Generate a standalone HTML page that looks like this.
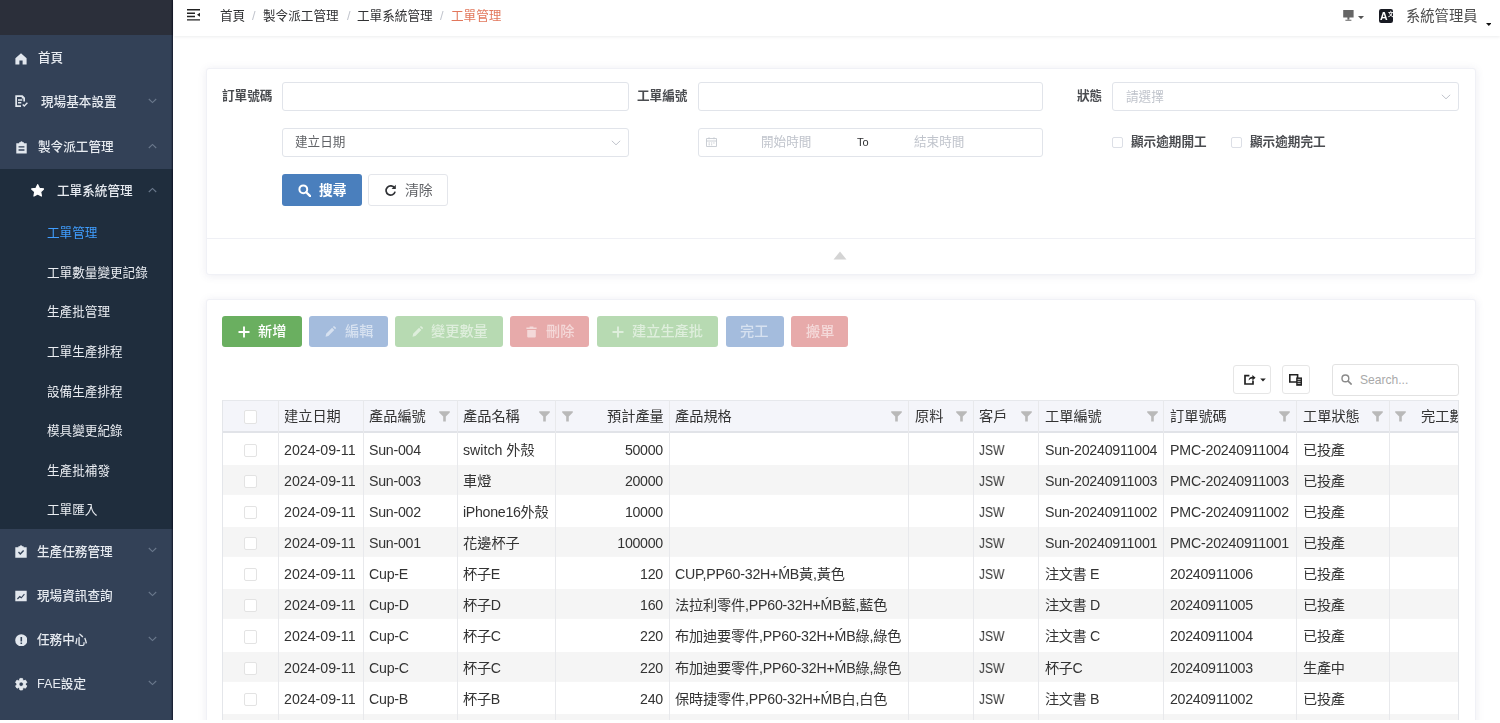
<!DOCTYPE html>
<html lang="zh-Hant">
<head>
<meta charset="utf-8">
<title>工單管理</title>
<style>
*{box-sizing:border-box;margin:0;padding:0}
html,body{width:1500px;height:723px;overflow:hidden;background:#fff}
body{font-family:"Liberation Sans","Noto Sans CJK TC",sans-serif;font-size:12.6px;color:#303133;position:relative}
.abs{position:absolute}
.td,.th,.mi,.si,.bc,.lbl,.btn span,.ph,.tx{will-change:transform}
/* sidebar */
#side{position:absolute;left:0;top:0;width:173.3px;height:723px;background:#334157}
#logo{position:absolute;left:0;top:0;width:173.3px;height:35px;background:#2b2f3a}
#sub{position:absolute;left:0;top:168.5px;width:173.3px;height:360.5px;background:#1f2d3d}
.mi{position:absolute;left:38px;font-weight:500;color:#e6eaf0;font-size:12.6px;line-height:16px;white-space:nowrap;height:16px}
.si{position:absolute;left:47px;color:#eaedf2;font-size:12.6px;line-height:16px;white-space:nowrap;height:16px}
.si.act{color:#409eff}
.ico{position:absolute}
.arr{position:absolute;left:148px;width:9px;height:6px}
/* navbar */
#nav{position:absolute;left:173.5px;top:0;width:1326.5px;height:36px;background:#fff;box-shadow:0 1px 3px rgba(0,21,41,.08)}
.bc{position:absolute;top:8px;line-height:16px;font-size:12.6px;color:#303133;white-space:nowrap}
.bc.sep{color:#c0c4cc}
.bc.last{color:#e2775c}
/* cards */
.card{position:absolute;background:#fff;border:1px solid #f0f1f6;border-radius:3px;box-shadow:0 1px 9px rgba(70,70,120,.10)}
.lbl{position:absolute;font-weight:700;color:#4a4c50;font-size:12.6px;line-height:16px;white-space:nowrap}
.inp{position:absolute;height:28.4px;border:1px solid #e1e4ea;border-radius:3px;background:#fff}
.ph{position:absolute;color:#c0c4cc;font-size:11px;line-height:14px;white-space:nowrap}
.cb{position:absolute;width:11px;height:11px;border:1px solid #dcdfe6;border-radius:2px;background:#fff}
.btn{position:absolute;border-radius:3px;color:#fff;font-size:12.6px;white-space:nowrap}
.btn span{position:absolute;line-height:16px}
/* table */
#tbl{position:absolute;left:222px;top:399.8px;width:1236.5px;height:322.5px;overflow:hidden;border-left:1px solid #e4e6ea;border-right:1px solid #e4e6ea}
#thead{position:absolute;left:0;top:0;width:1236.5px;height:33.2px;background:#f4f5fa;border-top:1px solid #e6e8ec;border-bottom:2px solid #e1e3e8}
.tr{position:absolute;left:0;width:1236.5px;height:31.2px}
.tr.g{background:linear-gradient(#f5f5f5,#f5f5f5) 0 0.6px/100% 29.9px no-repeat}
.vl{position:absolute;top:0;width:1px;height:323px;background:#e8e9ec}
.th{position:absolute;top:8.4px;font-size:14.2px;line-height:16px;color:#333;white-space:nowrap}
.td{position:absolute;font-size:14.2px;line-height:18px;color:#333;white-space:nowrap;top:7.7px}
.td.r{text-align:right}
.fl{position:absolute;top:11px;width:11px;height:11px}
</style>
</head>
<body>
<div id="side">
  <div id="logo"></div>
  <div id="sub"></div>
  <div class="abs" style="left:170.8px;top:0;width:2.5px;height:723px;background:linear-gradient(90deg,rgba(8,10,28,0),rgba(8,10,28,.75))"></div>
  <!-- icons -->
  <svg class="ico" style="left:14.8px;top:52.6px" width="12" height="12" viewBox="0 0 12 12"><path d="M6 0.3 L11.6 5.2 V11.6 H7.6 V7.6 H4.4 V11.6 H0.4 V5.2 Z" fill="#e2e7ee"/></svg>
  <svg class="ico" style="left:15px;top:95.2px" width="13" height="13" viewBox="0 0 13 13"><path d="M0.3 0.3 H7.6 L10 2.7 V6.6 H8.3 V3.6 H6.7 V2 H2 V10.3 H6 V12 H0.3 Z M3 4.3 H7.3 V5.7 H3 Z M3 7 H6.3 V8.4 H3 Z M7.2 10 L8.2 9 L9.3 10.1 L11.9 7.3 L12.9 8.3 L9.3 12.1 Z" fill="#e2e7ee"/></svg>
  <svg class="ico" style="left:15.5px;top:141.4px" width="11" height="12.6" viewBox="0 0 12 13" preserveAspectRatio="none"><path d="M0.3 2.2 H3.4 V1.2 H4.6 Q6 -0.6 7.4 1.2 H8.6 V2.2 H11.7 V12.8 H0.3 Z M2.8 5.4 V6.8 H9.2 V5.4 Z M2.8 8.6 V10 H9.2 V8.6 Z" fill="#e2e7ee" fill-rule="evenodd"/></svg>
  <svg class="ico" style="left:30.9px;top:183.9px" width="13.4" height="12.8" viewBox="-0.5 -0.5 14 13.4"><path d="M6.5 0.2 L8.4 4.2 L12.8 4.7 L9.6 7.7 L10.4 12.1 L6.5 10 L2.6 12.1 L3.4 7.7 L0.2 4.7 L4.6 4.2 Z" fill="#ffffff" stroke="#fff" stroke-width="1.3" stroke-linejoin="round"/></svg>
  <svg class="ico" style="left:14.8px;top:545.2px" width="12" height="13" viewBox="0 0 12 13"><path d="M0.3 2.2 H3.4 V1.2 H4.6 Q6 -0.6 7.4 1.2 H8.6 V2.2 H11.7 V12.8 H0.3 Z M3 7.6 L4 6.6 L5.3 7.9 L8.1 5.1 L9.1 6.1 L5.3 9.9 Z" fill="#e2e7ee" fill-rule="evenodd"/></svg>
  <svg class="ico" style="left:14.8px;top:590px" width="12" height="12" viewBox="0 0 12 12"><path d="M0.3 0.8 H11.7 V11.2 H0.3 Z M2 8.6 L2.8 9.4 L4.8 7.4 L6.4 8.6 L9.8 4.6 L9 3.8 L6.3 7 L4.7 5.8 Z" fill="#e2e7ee" fill-rule="evenodd"/></svg>
  <svg class="ico" style="left:14.5px;top:633.8px" width="12.6" height="12.6" viewBox="0 0 12.6 12.6"><path d="M6.3 0.2 A6.1 6.1 0 1 0 6.3 12.4 A6.1 6.1 0 1 0 6.3 0.2 Z M5.5 3 H7.1 V7.4 H5.5 Z M5.5 8.4 H7.1 V10 H5.5 Z" fill="#e2e7ee" fill-rule="evenodd"/></svg>
  <svg class="ico" style="left:13.6px;top:677.4px" width="14.4" height="14.4" viewBox="0 0 24 24"><path d="M19.14 12.94c.04-.3.06-.61.06-.94 0-.32-.02-.64-.07-.94l2.03-1.58a.49.49 0 0 0 .12-.61l-1.92-3.32a.488.488 0 0 0-.59-.22l-2.39.96c-.5-.38-1.030-.7-1.620-.94l-.36-2.540a.484.484 0 0 0-.48-.41h-3.840c-.24 0-.43.17-.47.41l-.36 2.540c-.59.240-1.130.570-1.620.94l-2.390-.96c-.22-.08-.47 0-.59.22L2.740 8.870c-.12.210-.08.470.12.610l2.030 1.580c-.05.300-.09.630-.09.940s.02.640.07.940l-2.030 1.580a.49.49 0 0 0-.12.610l1.920 3.320c.12.220.37.290.59.220l2.390-.96c.5.380 1.030.7 1.620.94l.36 2.540c.05.240.24.410.48.410h3.840c.24 0 .44-.17.470-.41l.36-2.540c.59-.24 1.130-.56 1.620-.94l2.390.96c.22.08.47 0 .59-.22l1.920-3.320c.12-.22.070-.47-.12-.61l-2.010-1.580zM12 15.600c-1.980 0-3.600-1.620-3.600-3.600s1.620-3.600 3.600-3.600 3.600 1.620 3.600 3.600-1.620 3.600-3.600 3.600z" fill="#e2e7ee" stroke="#f4f6f9" stroke-width="1.2"/></svg>
  <!-- labels -->
  <div class="mi" style="left:37.6px;top:50px">首頁</div>
  <div class="mi" style="left:40.5px;top:94px">現場基本設置</div>
  <div class="mi" style="left:37.6px;top:139px">製令派工管理</div>
  <div class="mi" style="left:56.5px;top:183.3px">工單系統管理</div>
  <div class="si act" style="top:225.3px">工單管理</div>
  <div class="si" style="top:264.8px">工單數量變更記錄</div>
  <div class="si" style="top:304.3px">生產批管理</div>
  <div class="si" style="top:343.8px">工單生產排程</div>
  <div class="si" style="top:383.5px">設備生產排程</div>
  <div class="si" style="top:423.1px">模具變更紀錄</div>
  <div class="si" style="top:462.6px">生產批補發</div>
  <div class="si" style="top:502.2px">工單匯入</div>
  <div class="mi" style="left:37.3px;top:543.5px">生產任務管理</div>
  <div class="mi" style="left:37.3px;top:587.7px">現場資訊查詢</div>
  <div class="mi" style="left:37.3px;top:632px">任務中心</div>
  <div class="mi" style="left:37.3px;top:676.3px">FAE設定</div>
  <!-- arrows -->
  <svg class="arr" style="top:98px" viewBox="0 0 9 6"><path d="M0.8 1 L4.5 4.6 L8.2 1" fill="none" stroke="#6a788c" stroke-width="1.1"/></svg>
  <svg class="arr" style="top:142.5px" viewBox="0 0 9 6"><path d="M0.8 5 L4.5 1.4 L8.2 5" fill="none" stroke="#6a788c" stroke-width="1.1"/></svg>
  <svg class="arr" style="top:186.5px" viewBox="0 0 9 6"><path d="M0.8 5 L4.5 1.4 L8.2 5" fill="none" stroke="#6a788c" stroke-width="1.1"/></svg>
  <svg class="arr" style="top:547px" viewBox="0 0 9 6"><path d="M0.8 1 L4.5 4.6 L8.2 1" fill="none" stroke="#6a788c" stroke-width="1.1"/></svg>
  <svg class="arr" style="top:591px" viewBox="0 0 9 6"><path d="M0.8 1 L4.5 4.6 L8.2 1" fill="none" stroke="#6a788c" stroke-width="1.1"/></svg>
  <svg class="arr" style="top:635.5px" viewBox="0 0 9 6"><path d="M0.8 1 L4.5 4.6 L8.2 1" fill="none" stroke="#6a788c" stroke-width="1.1"/></svg>
  <svg class="arr" style="top:680px" viewBox="0 0 9 6"><path d="M0.8 1 L4.5 4.6 L8.2 1" fill="none" stroke="#6a788c" stroke-width="1.1"/></svg>
</div>
<div id="nav">
  <svg class="ico" style="left:13.3px;top:9.3px" width="13.2" height="11.8" viewBox="0 0 13.2 11.8"><path d="M0 0 H13.2 V1.4 H0 Z M0 3.5 H8 V4.9 H0 Z M0 6.8 H8 V8.2 H0 Z M0 10.2 H13.2 V11.6 H0 Z M13.2 3.7 V8 L10 5.85 Z" fill="#222"/></svg>
  <div class="bc" style="left:46.6px">首頁</div>
  <div class="bc sep" style="left:78.5px">/</div>
  <div class="bc" style="left:89.6px">製令派工管理</div>
  <div class="bc sep" style="left:173px">/</div>
  <div class="bc" style="left:183.8px">工單系統管理</div>
  <div class="bc sep" style="left:266.5px">/</div>
  <div class="bc last" style="left:277.4px">工單管理</div>
<svg class="ico" style="left:1169.9px;top:10.2px" width="10.8" height="11" viewBox="0 0 10.8 11"><path d="M0.2 0 H10.6 V7.6 H0.2 Z M4.4 7.6 H6.4 V9.6 H4.4 Z M2.4 9.8 H8.4 V10.8 H2.4 Z" fill="#666"/></svg>
  <svg class="ico" style="left:1184.5px;top:15.8px" width="6" height="3.2" viewBox="0 0 6 3.2"><path d="M0 0 H6 L3 3.2 Z" fill="#555"/></svg>
  <div class="abs" style="left:1205.6px;top:8.5px;width:14.2px;height:14.2px;border-radius:2.2px;background:#181a22"></div>
  <div class="abs tx" style="left:1206.9px;top:10.2px;font-size:10.5px;line-height:12px;font-weight:700;color:#fff">A</div>
  <div class="abs tx" style="left:1214.1px;top:10.6px;font-size:5.5px;line-height:6px;font-weight:700;color:#fff">文</div>
  <div class="abs tx" style="left:1232.6px;top:6.6px;font-size:14.3px;line-height:18px;color:#4d4d4d;white-space:nowrap">系統管理員</div>
  <svg class="ico" style="left:1312.3px;top:23.2px" width="5.6" height="3" viewBox="0 0 5.6 3"><path d="M0 0 H5.6 L2.8 3 Z" fill="#111"/></svg>
</div>
<div class="card" id="c1" style="left:205.5px;top:67.5px;width:1270px;height:207px">
  <div class="lbl" style="left:15.5px;top:19.8px">訂單號碼</div>
  <div class="inp" style="left:75.8px;top:13.9px;width:346.90000000000003px"></div>
  <div class="lbl" style="left:430.8px;top:19.8px">工單編號</div>
  <div class="inp" style="left:491.3px;top:13.9px;width:345.70000000000005px"></div>
  <div class="lbl" style="left:870.8px;top:19.8px">狀態</div>
  <div class="inp" style="left:905.8px;top:13.9px;width:346.70000000000005px"></div>
  <div class="ph" style="left:919.3px;top:20.0px;font-size:12.6px;line-height:16px">請選擇</div>
  <svg class="abs" style="left:1234.0px;top:25.5px" width="10" height="6" viewBox="0 0 10 6"><path d="M0.8 0.8 L5 4.8 L9.2 0.8" fill="none" stroke="#c0c4cc" stroke-width="1"/></svg>

  <div class="inp" style="left:75.8px;top:59.7px;width:346.90000000000003px"></div>
  <div class="abs tx" style="left:88.7px;top:65.3px;font-size:12.6px;line-height:16px;color:#606266;white-space:nowrap">建立日期</div>
  <svg class="abs" style="left:404.0px;top:71.3px" width="10" height="6" viewBox="0 0 10 6"><path d="M0.8 0.8 L5 4.8 L9.2 0.8" fill="none" stroke="#c0c4cc" stroke-width="1"/></svg>

  <div class="inp" style="left:491.3px;top:59.7px;width:345.70000000000005px"></div>
  <svg class="abs" style="left:499.8px;top:68.8px" width="11" height="10" viewBox="0 0 11 10"><path d="M0.5 1.5 H10.5 V9.5 H0.5 Z M0.5 4 H10.5 M3 0.3 V2.2 M8 0.3 V2.2 M2.5 6 H4 M5 6 H6.2 M7.2 6 H8.6 M2.5 7.8 H4 M5 7.8 H6.2" fill="none" stroke="#c5c9d0" stroke-width="0.9"/></svg>
  <div class="ph" style="left:554.8px;top:65.3px;font-size:12.6px;line-height:16px">開始時間</div>
  <div class="abs tx" style="left:650.8px;top:66.8px;font-size:11px;line-height:14px;color:#303133">To</div>
  <div class="ph" style="left:707.2px;top:65.3px;font-size:12.6px;line-height:16px">結束時間</div>

  <div class="cb" style="left:905.8px;top:68.5px"></div>
  <div class="lbl" style="left:924.8px;top:65.7px">顯示逾期開工</div>
  <div class="cb" style="left:1024.5px;top:68.5px"></div>
  <div class="lbl" style="left:1043.8px;top:65.7px">顯示逾期完工</div>

  <div class="btn" style="left:75.8px;top:105.8px;width:79.69999999999999px;height:31.7px;background:#4a7fbd">
    <svg class="abs" style="left:15.4px;top:9.6px" width="13.4" height="13.4" viewBox="0 0 13.4 13.4"><circle cx="5.3" cy="5.3" r="3.9" fill="none" stroke="#fff" stroke-width="2"/><path d="M8.2 8.2 L12.4 12.4" stroke="#fff" stroke-width="2.3" stroke-linecap="round"/></svg>
    <span style="left:37.2px;top:8.4px;font-size:13.8px;font-weight:700">搜尋</span>
  </div>
  <div class="btn" style="left:161.8px;top:105.8px;width:79.39999999999998px;height:31.7px;background:#fff;border:1px solid #e4e6eb;color:#606266">
    <svg class="abs" style="left:14.5px;top:9px" width="13" height="13" viewBox="0 0 13 13"><path d="M10.6 4.2 A4.6 4.6 0 1 0 11.1 7.6" fill="none" stroke="#2f3135" stroke-width="1.7"/><path d="M7.6 4.9 H11.8 V0.7 Z" fill="#2f3135"/></svg>
    <span style="left:35.3px;top:7.4px;font-size:13.8px">清除</span>
  </div>

  <div class="abs" style="left:0;top:169.5px;width:1268px;height:1px;background:#eff0f5"></div>
  <svg class="abs" style="left:626.5px;top:182.0px" width="14" height="9" viewBox="0 0 14 9"><path d="M7 0.5 L13.5 8.5 H0.5 Z" fill="#d4d4d4"/></svg>
</div>
<div class="card" id="c2" style="left:205.5px;top:298.5px;width:1270px;height:440px">
<div class="btn" style="left:15.8px;top:16.3px;width:79.5px;height:31.7px;background:#6aaf60"><svg class="abs" style="left:15.9px;top:9.8px" width="12" height="12" viewBox="0 0 12 12"><path d="M6 0.5 V11.5 M0.5 6 H11.5" stroke="#fff" stroke-width="1.9"/></svg><span style="left:35.3px;top:7.4px;font-size:14.2px;font-weight:500;color:#fff">新增</span></div>
<div class="btn" style="left:102.1px;top:16.3px;width:79.8px;height:31.7px;background:#a4bcdd"><svg class="abs" style="left:16.7px;top:10.2px" width="11.2" height="11.2" viewBox="0 0 12 12"><path d="M0.6 11.4 L1.2 8.4 L7.6 2 L10 4.4 L3.6 10.8 Z M8.4 1.2 L9.2 0.4 Q9.8 0 10.4 0.5 L11.5 1.6 Q12 2.2 11.6 2.8 L10.8 3.6 Z" fill="rgba(255,255,255,.55)"/></svg><span style="left:36.3px;top:7.4px;font-size:14.2px;font-weight:500;color:rgba(255,255,255,.55)">編輯</span></div>
<div class="btn" style="left:188.7px;top:16.3px;width:107.7px;height:31.7px;background:#b7dab2"><svg class="abs" style="left:16.5px;top:10.2px" width="11.2" height="11.2" viewBox="0 0 12 12"><path d="M0.6 11.4 L1.2 8.4 L7.6 2 L10 4.4 L3.6 10.8 Z M8.4 1.2 L9.2 0.4 Q9.8 0 10.4 0.5 L11.5 1.6 Q12 2.2 11.6 2.8 L10.8 3.6 Z" fill="rgba(255,255,255,.55)"/></svg><span style="left:35.9px;top:7.4px;font-size:14.2px;font-weight:500;color:rgba(255,255,255,.55)">變更數量</span></div>
<div class="btn" style="left:303.6px;top:16.3px;width:79.4px;height:31.7px;background:#e7aaaa"><svg class="abs" style="left:16.2px;top:10px" width="11" height="12" viewBox="0 0 11 12"><path d="M0.4 1.4 H3.6 V0.4 H7.4 V1.4 H10.6 V3 H0.4 Z M1.2 4 H9.8 V10.6 Q9.8 11.6 8.8 11.6 H2.2 Q1.2 11.6 1.2 10.6 Z" fill="rgba(255,255,255,.55)"/></svg><span style="left:36.3px;top:7.4px;font-size:14.2px;font-weight:500;color:rgba(255,255,255,.55)">刪除</span></div>
<div class="btn" style="left:390.0px;top:16.3px;width:121.9px;height:31.7px;background:#b7dab2"><svg class="abs" style="left:15.8px;top:9.8px" width="12" height="12" viewBox="0 0 12 12"><path d="M6 0.5 V11.5 M0.5 6 H11.5" stroke="rgba(255,255,255,.55)" stroke-width="1.9"/></svg><span style="left:35.8px;top:7.4px;font-size:14.2px;font-weight:500;color:rgba(255,255,255,.55)">建立生產批</span></div>
<div class="btn" style="left:519.1px;top:16.3px;width:58.1px;height:31.7px;background:#a4bcdd"><span style="left:14.7px;top:7.4px;font-size:14.2px;font-weight:500;color:rgba(255,255,255,.55)">完工</span></div>
<div class="btn" style="left:584.4px;top:16.3px;width:57.6px;height:31.7px;background:#e7aaaa"><span style="left:14.7px;top:7.4px;font-size:14.2px;font-weight:500;color:rgba(255,255,255,.55)">搬單</span></div>
  <div class="abs" style="left:1026.6px;top:65.6px;width:38.3px;height:28.8px;border:1px solid #e6e6e6;border-radius:3px;background:#fff">
    <svg class="abs" style="left:9.8px;top:7.6px" width="12" height="11" viewBox="0 0 12 11"><path d="M5.4 1.6 H1 V10 H9 V6.4" fill="none" stroke="#222" stroke-width="1.7"/><path d="M4.6 6.4 Q5 3 8.4 2.8 V1 L11.6 3.7 L8.4 6.4 V4.6 Q6 4.6 4.6 6.4 Z" fill="#222"/></svg>
    <svg class="abs" style="left:26.4px;top:11.6px" width="6" height="4" viewBox="0 0 6 4"><path d="M0.2 0.4 H5.8 L3 3.6 Z" fill="#222"/></svg>
  </div>
  <div class="abs" style="left:1075.0px;top:65.6px;width:28.6px;height:28.8px;border:1px solid #e6e6e6;border-radius:3px;background:#fff">
    <svg class="abs" style="left:6.8px;top:8px" width="13.4" height="12" viewBox="0 0 13.4 12"><path d="M0.8 0.8 H8.6 V8 H0.8 Z" fill="none" stroke="#222" stroke-width="1.6"/><path d="M7.2 3.4 H13 V11.8 H7.2 Z" fill="#222"/><path d="M8.6 5.4 H11.6 M8.6 7.4 H11.6 M8.6 9.4 H11.6" stroke="#fff" stroke-width="0.7"/></svg>
  </div>
  <div class="abs" style="left:1125.8px;top:64.5px;width:126.6px;height:31.7px;border:1px solid #e2e2e2;border-radius:3px;background:#fff">
    <svg class="abs" style="left:7.8px;top:9px" width="11.4" height="11.4" viewBox="0 0 11.4 11.4"><circle cx="4.4" cy="4.4" r="3.4" fill="none" stroke="#8a8a8a" stroke-width="1.4"/><path d="M6.9 6.9 L10.6 10.6" stroke="#8a8a8a" stroke-width="1.6"/></svg>
    <div class="abs" style="left:26.6px;top:8px;font-size:12.1px;line-height:14px;color:#a9a9a9">Search...</div>
  </div>
</div>
<div id="tbl">
<div id="thead"></div>
<div class="tr" style="top:33.2px"><div class="cb" style="left:21.0px;top:10.6px;width:13.2px;height:13.2px;border-color:#e3e3e3"></div><div class="td" style="left:61.4px">2024-09-11</div><div class="td" style="left:146.1px;letter-spacing:-0.25px">Sun-004</div><div class="td" style="left:239.7px">switch 外殼</div><div class="td r" style="left:336.8px;width:102.9px;letter-spacing:-0.3px">50000</div><div class="td" style="left:756.3px;transform:scaleX(.85);transform-origin:0 50%">JSW</div><div class="td" style="left:821.6px;letter-spacing:-0.23px">Sun-20240911004</div><div class="td" style="left:947.1px;letter-spacing:-0.2px">PMC-20240911004</div><div class="td" style="left:1079.5px;letter-spacing:-0.3px">已投產</div></div>
<div class="tr g" style="top:64.33px"><div class="cb" style="left:21.0px;top:10.6px;width:13.2px;height:13.2px;border-color:#e3e3e3"></div><div class="td" style="left:61.4px">2024-09-11</div><div class="td" style="left:146.1px;letter-spacing:-0.25px">Sun-003</div><div class="td" style="left:239.7px">車燈</div><div class="td r" style="left:336.8px;width:102.9px;letter-spacing:-0.3px">20000</div><div class="td" style="left:756.3px;transform:scaleX(.85);transform-origin:0 50%">JSW</div><div class="td" style="left:821.6px;letter-spacing:-0.23px">Sun-20240911003</div><div class="td" style="left:947.1px;letter-spacing:-0.2px">PMC-20240911003</div><div class="td" style="left:1079.5px;letter-spacing:-0.3px">已投產</div></div>
<div class="tr" style="top:95.46px"><div class="cb" style="left:21.0px;top:10.6px;width:13.2px;height:13.2px;border-color:#e3e3e3"></div><div class="td" style="left:61.4px">2024-09-11</div><div class="td" style="left:146.1px;letter-spacing:-0.25px">Sun-002</div><div class="td" style="left:239.7px;letter-spacing:-0.3px">iPhone16外殼</div><div class="td r" style="left:336.8px;width:102.9px;letter-spacing:-0.3px">10000</div><div class="td" style="left:756.3px;transform:scaleX(.85);transform-origin:0 50%">JSW</div><div class="td" style="left:821.6px;letter-spacing:-0.23px">Sun-20240911002</div><div class="td" style="left:947.1px;letter-spacing:-0.2px">PMC-20240911002</div><div class="td" style="left:1079.5px;letter-spacing:-0.3px">已投產</div></div>
<div class="tr g" style="top:126.59px"><div class="cb" style="left:21.0px;top:10.6px;width:13.2px;height:13.2px;border-color:#e3e3e3"></div><div class="td" style="left:61.4px">2024-09-11</div><div class="td" style="left:146.1px;letter-spacing:-0.25px">Sun-001</div><div class="td" style="left:239.7px">花邊杯子</div><div class="td r" style="left:336.8px;width:102.9px;letter-spacing:-0.3px">100000</div><div class="td" style="left:756.3px;transform:scaleX(.85);transform-origin:0 50%">JSW</div><div class="td" style="left:821.6px;letter-spacing:-0.23px">Sun-20240911001</div><div class="td" style="left:947.1px;letter-spacing:-0.2px">PMC-20240911001</div><div class="td" style="left:1079.5px;letter-spacing:-0.3px">已投產</div></div>
<div class="tr" style="top:157.72px"><div class="cb" style="left:21.0px;top:10.6px;width:13.2px;height:13.2px;border-color:#e3e3e3"></div><div class="td" style="left:61.4px">2024-09-11</div><div class="td" style="left:146.1px;letter-spacing:-0.25px">Cup-E</div><div class="td" style="left:239.7px;letter-spacing:-0.3px">杯子E</div><div class="td r" style="left:336.8px;width:102.9px;letter-spacing:-0.3px">120</div><div class="td" style="left:451.6px;letter-spacing:-0.2px">CUP,PP60-32H+ḾB黃,黃色</div><div class="td" style="left:756.3px;transform:scaleX(.85);transform-origin:0 50%">JSW</div><div class="td" style="left:821.6px;letter-spacing:-0.4px">注文書 E</div><div class="td" style="left:947.1px;letter-spacing:-0.27px">20240911006</div><div class="td" style="left:1079.5px;letter-spacing:-0.3px">已投產</div></div>
<div class="tr g" style="top:188.85px"><div class="cb" style="left:21.0px;top:10.6px;width:13.2px;height:13.2px;border-color:#e3e3e3"></div><div class="td" style="left:61.4px">2024-09-11</div><div class="td" style="left:146.1px;letter-spacing:-0.25px">Cup-D</div><div class="td" style="left:239.7px;letter-spacing:-0.3px">杯子D</div><div class="td r" style="left:336.8px;width:102.9px;letter-spacing:-0.3px">160</div><div class="td" style="left:451.6px;letter-spacing:-0.2px">法拉利零件,PP60-32H+ḾB藍,藍色</div><div class="td" style="left:821.6px;letter-spacing:-0.4px">注文書 D</div><div class="td" style="left:947.1px;letter-spacing:-0.27px">20240911005</div><div class="td" style="left:1079.5px;letter-spacing:-0.3px">已投產</div></div>
<div class="tr" style="top:219.98px"><div class="cb" style="left:21.0px;top:10.6px;width:13.2px;height:13.2px;border-color:#e3e3e3"></div><div class="td" style="left:61.4px">2024-09-11</div><div class="td" style="left:146.1px;letter-spacing:-0.25px">Cup-C</div><div class="td" style="left:239.7px;letter-spacing:-0.3px">杯子C</div><div class="td r" style="left:336.8px;width:102.9px;letter-spacing:-0.3px">220</div><div class="td" style="left:451.6px;letter-spacing:-0.2px">布加迪要零件,PP60-32H+ḾB綠,綠色</div><div class="td" style="left:756.3px;transform:scaleX(.85);transform-origin:0 50%">JSW</div><div class="td" style="left:821.6px;letter-spacing:-0.4px">注文書 C</div><div class="td" style="left:947.1px;letter-spacing:-0.27px">20240911004</div><div class="td" style="left:1079.5px;letter-spacing:-0.3px">已投產</div></div>
<div class="tr g" style="top:251.11px"><div class="cb" style="left:21.0px;top:10.6px;width:13.2px;height:13.2px;border-color:#e3e3e3"></div><div class="td" style="left:61.4px">2024-09-11</div><div class="td" style="left:146.1px;letter-spacing:-0.25px">Cup-C</div><div class="td" style="left:239.7px;letter-spacing:-0.3px">杯子C</div><div class="td r" style="left:336.8px;width:102.9px;letter-spacing:-0.3px">220</div><div class="td" style="left:451.6px;letter-spacing:-0.2px">布加迪要零件,PP60-32H+ḾB綠,綠色</div><div class="td" style="left:756.3px;transform:scaleX(.85);transform-origin:0 50%">JSW</div><div class="td" style="left:821.6px;letter-spacing:-0.4px">杯子C</div><div class="td" style="left:947.1px;letter-spacing:-0.27px">20240911003</div><div class="td" style="left:1079.5px;letter-spacing:-0.3px">生產中</div></div>
<div class="tr" style="top:282.24px"><div class="cb" style="left:21.0px;top:10.6px;width:13.2px;height:13.2px;border-color:#e3e3e3"></div><div class="td" style="left:61.4px">2024-09-11</div><div class="td" style="left:146.1px;letter-spacing:-0.25px">Cup-B</div><div class="td" style="left:239.7px;letter-spacing:-0.3px">杯子B</div><div class="td r" style="left:336.8px;width:102.9px;letter-spacing:-0.3px">240</div><div class="td" style="left:451.6px;letter-spacing:-0.2px">保時捷零件,PP60-32H+ḾB白,白色</div><div class="td" style="left:756.3px;transform:scaleX(.85);transform-origin:0 50%">JSW</div><div class="td" style="left:821.6px;letter-spacing:-0.4px">注文書 B</div><div class="td" style="left:947.1px;letter-spacing:-0.27px">20240911002</div><div class="td" style="left:1079.5px;letter-spacing:-0.3px">已投產</div></div>
<div class="tr g" style="top:313.37px"></div>
<div class="cb" style="left:21.0px;top:10.6px;width:13.2px;height:13.2px;border-color:#e3e3e3"></div>
<div class="th" style="left:61.4px">建立日期</div>
<div class="th" style="left:146.1px">產品編號</div><svg class="fl" style="left:216.4px" viewBox="0 0 11 11"><path d="M0.2 0.3 H10.8 V1.4 L6.8 5.6 V10.6 H4.2 V5.6 L0.2 1.4 Z" fill="#b9b9b9"/></svg>
<div class="th" style="left:239.7px">產品名稱</div><svg class="fl" style="left:315.8px" viewBox="0 0 11 11"><path d="M0.2 0.3 H10.8 V1.4 L6.8 5.6 V10.6 H4.2 V5.6 L0.2 1.4 Z" fill="#b9b9b9"/></svg>
<div class="th" style="left:451.6px">產品規格</div><svg class="fl" style="left:668.2px" viewBox="0 0 11 11"><path d="M0.2 0.3 H10.8 V1.4 L6.8 5.6 V10.6 H4.2 V5.6 L0.2 1.4 Z" fill="#b9b9b9"/></svg>
<div class="th" style="left:691.5px">原料</div><svg class="fl" style="left:732.8px" viewBox="0 0 11 11"><path d="M0.2 0.3 H10.8 V1.4 L6.8 5.6 V10.6 H4.2 V5.6 L0.2 1.4 Z" fill="#b9b9b9"/></svg>
<div class="th" style="left:756.3px">客戶</div><svg class="fl" style="left:797.8px" viewBox="0 0 11 11"><path d="M0.2 0.3 H10.8 V1.4 L6.8 5.6 V10.6 H4.2 V5.6 L0.2 1.4 Z" fill="#b9b9b9"/></svg>
<div class="th" style="left:821.6px">工單編號</div><svg class="fl" style="left:923.6px" viewBox="0 0 11 11"><path d="M0.2 0.3 H10.8 V1.4 L6.8 5.6 V10.6 H4.2 V5.6 L0.2 1.4 Z" fill="#b9b9b9"/></svg>
<div class="th" style="left:947.1px">訂單號碼</div><svg class="fl" style="left:1056.3px" viewBox="0 0 11 11"><path d="M0.2 0.3 H10.8 V1.4 L6.8 5.6 V10.6 H4.2 V5.6 L0.2 1.4 Z" fill="#b9b9b9"/></svg>
<div class="th" style="left:1079.5px">工單狀態</div><svg class="fl" style="left:1149.3px" viewBox="0 0 11 11"><path d="M0.2 0.3 H10.8 V1.4 L6.8 5.6 V10.6 H4.2 V5.6 L0.2 1.4 Z" fill="#b9b9b9"/></svg>
<div class="th" style="left:1197.5px">完工數量</div><svg class="fl" style="left:1172.3px" viewBox="0 0 11 11"><path d="M0.2 0.3 H10.8 V1.4 L6.8 5.6 V10.6 H4.2 V5.6 L0.2 1.4 Z" fill="#b9b9b9"/></svg>
<div class="th" style="left:383.7px">預計產量</div><svg class="fl" style="left:338.8px" viewBox="0 0 11 11"><path d="M0.2 0.3 H10.8 V1.4 L6.8 5.6 V10.6 H4.2 V5.6 L0.2 1.4 Z" fill="#b9b9b9"/></svg>
<div class="vl" style="left:55.4px"></div><div class="vl" style="left:140.1px"></div><div class="vl" style="left:233.7px"></div><div class="vl" style="left:332.3px"></div><div class="vl" style="left:445.6px"></div><div class="vl" style="left:684.6px"></div><div class="vl" style="left:749.6px"></div><div class="vl" style="left:814.8px"></div><div class="vl" style="left:940.4px"></div><div class="vl" style="left:1073.1px"></div><div class="vl" style="left:1165.8px"></div>
</div>
<div class="abs" style="left:0;top:720.2px;width:1500px;height:3px;background:#fff"></div>
</body>
</html>
